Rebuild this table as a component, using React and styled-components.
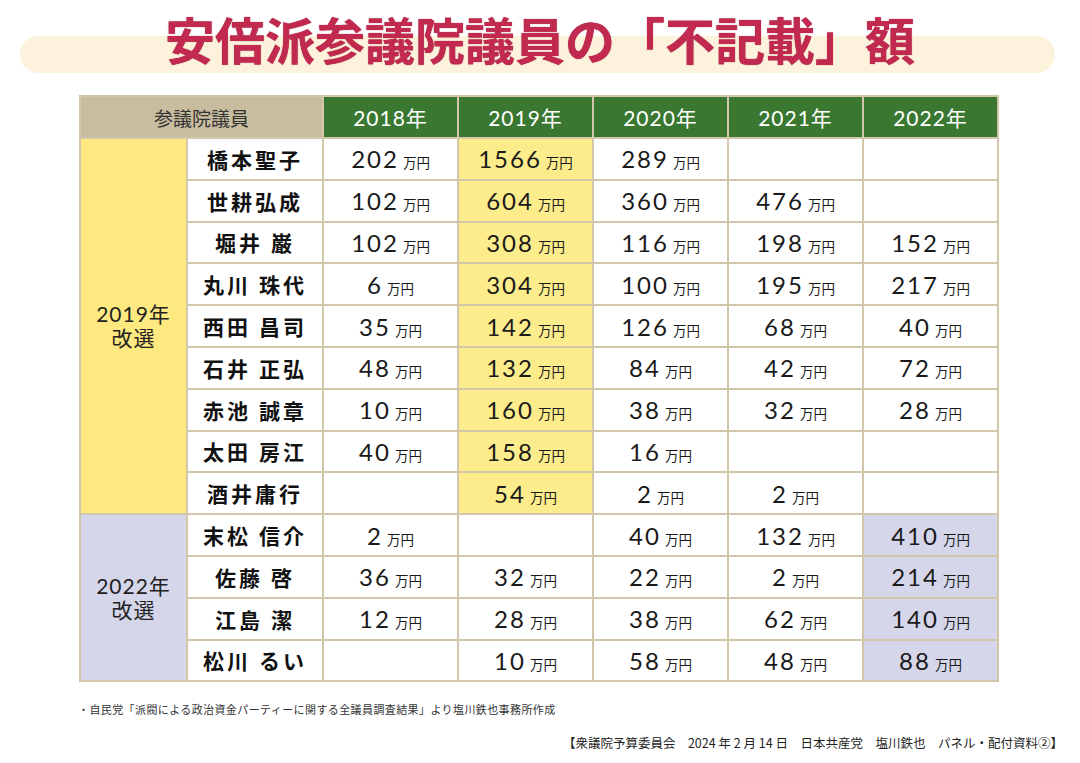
import React from "react";
import styled, { createGlobalStyle } from "styled-components";

const GlobalStyle = createGlobalStyle`
  body {
    margin: 0;
    background: #fff;
    font-family: "Noto Sans CJK JP", "Noto Sans", sans-serif;
  }
`;

const YEARS = ["2018年", "2019年", "2020年", "2021年", "2022年"];

const GROUPS = [
  {
    label: "2019年",
    sub: "改選",
    tone: "yellow",
    rows: [
      ["橋本聖子", [202, 1566, 289, null, null]],
      ["世耕弘成", [102, 604, 360, 476, null]],
      ["堀井 巌", [102, 308, 116, 198, 152]],
      ["丸川 珠代", [6, 304, 100, 195, 217]],
      ["西田 昌司", [35, 142, 126, 68, 40]],
      ["石井 正弘", [48, 132, 84, 42, 72]],
      ["赤池 誠章", [10, 160, 38, 32, 28]],
      ["太田 房江", [40, 158, 16, null, null]],
      ["酒井庸行", [null, 54, 2, 2, null]],
    ],
    hiCol: 1,
  },
  {
    label: "2022年",
    sub: "改選",
    tone: "lavender",
    rows: [
      ["末松 信介", [2, null, 40, 132, 410]],
      ["佐藤 啓", [36, 32, 22, 2, 214]],
      ["江島 潔", [12, 28, 38, 62, 140]],
      ["松川 るい", [null, 10, 58, 48, 88]],
    ],
    hiCol: 4,
  },
];

const TONES = {
  yellow: { group: "#fde97f", cell: "#fcec8c" },
  lavender: { group: "#d5d6ea", cell: "#d5d6ea" },
};

const Page = styled.div`
  width: 1080px;
  height: 763px;
  overflow: hidden;
`;

const TitleBar = styled.header`
  position: relative;
  height: 80px;
  display: flex;
  justify-content: center;
  align-items: flex-start;

  &::before {
    content: "";
    position: absolute;
    left: 20px;
    right: 25px;
    top: 36px;
    height: 37px;
    border-radius: 19px;
    background: #fdf2dc;
  }
`;

const Title = styled.h1`
  position: relative;
  margin: 7px 0 0;
  font-size: 50px;
  line-height: 62px;
  font-weight: 700;
  letter-spacing: 0;
  color: #c2294e;
  text-shadow: 0 0 1px #8e1c38;
`;

const Table = styled.table`
  margin: 15px 0 0 79px;
  border-collapse: collapse;
  table-layout: fixed;
  width: 918px;
  border: 2px solid #d2c7ab;

  td,
  th {
    border: 2px solid #d2c7ab;
    padding: 0;
    text-align: center;
    vertical-align: middle;
  }
`;

const HeadRow = styled.tr`
  height: 42px;
`;

const Row = styled.tr`
  height: 41.8px;
`;

const HeadLabel = styled.th`
  background: #c9bd9f;
  color: #333;
  font-size: 19px;
  font-weight: 400;
`;

const YearHead = styled.th`
  background: #3a7832;
  color: #fff;
  font-family: "Lato", "Noto Sans CJK JP", sans-serif;
  font-size: 21px;
  font-weight: 400;
  letter-spacing: 1px;
`;

const GroupCell = styled.td`
  background: ${(p) => TONES[p.$tone].group};
  color: #222;
  font-family: "Lato", "Noto Sans CJK JP", sans-serif;
  font-size: 21px;
  line-height: 24px;
  letter-spacing: 1px;
`;

const NameCell = styled.td`
  background: #fff;
  color: #111;
  font-size: 21px;
  font-weight: 700;
  letter-spacing: 3px;
  white-space: pre;
`;

const ValueCell = styled.td`
  background: ${(p) => (p.$tone ? TONES[p.$tone].cell : "#fff")};
  color: #1a1a1a;
  white-space: nowrap;
`;

const Num = styled.span`
  font-family: "Lato", "Noto Sans CJK JP", sans-serif;
  font-size: 24px;
  letter-spacing: 2px;
`;

const Unit = styled.span`
  margin-left: 4px;
  font-size: 13.5px;
`;

const Note = styled.p`
  margin: 19px 0 0 78px;
  font-size: 11px;
  color: #333;
  letter-spacing: 0.4px;
`;

const Credit = styled.p`
  margin: 16px 17px 0 0;
  text-align: right;
  font-size: 12.5px;
  color: #222;
  white-space: pre;
`;

function Value({ v, tone }) {
  return (
    <ValueCell $tone={tone}>
      {v != null && (
        <>
          <Num>{v}</Num>
          <Unit>万円</Unit>
        </>
      )}
    </ValueCell>
  );
}

export default function App() {
  return (
    <Page>
      <GlobalStyle />
      <TitleBar>
        <Title>安倍派参議院議員の「不記載」額</Title>
      </TitleBar>
      <Table>
        <colgroup>
          <col style={{ width: 107 }} />
          <col style={{ width: 136 }} />
          {YEARS.map((y) => (
            <col key={y} style={{ width: 135 }} />
          ))}
        </colgroup>
        <thead>
          <HeadRow>
            <HeadLabel colSpan={2}>参議院議員</HeadLabel>
            {YEARS.map((y) => (
              <YearHead key={y}>{y}</YearHead>
            ))}
          </HeadRow>
        </thead>
        <tbody>
          {GROUPS.map((g) =>
            g.rows.map(([name, vals], i) => (
              <Row key={name}>
                {i === 0 && (
                  <GroupCell rowSpan={g.rows.length} $tone={g.tone}>
                    {g.label}
                    <br />
                    {g.sub}
                  </GroupCell>
                )}
                <NameCell>{name}</NameCell>
                {vals.map((v, c) => (
                  <Value key={c} v={v} tone={c === g.hiCol ? g.tone : null} />
                ))}
              </Row>
            ))
          )}
        </tbody>
      </Table>
      <Note>・自民党「派閥による政治資金パーティーに関する全議員調査結果」より塩川鉄也事務所作成</Note>
      <Credit>【衆議院予算委員会　2024 年 2 月 14 日　日本共産党　塩川鉄也　パネル・配付資料②】</Credit>
    </Page>
  );
}
